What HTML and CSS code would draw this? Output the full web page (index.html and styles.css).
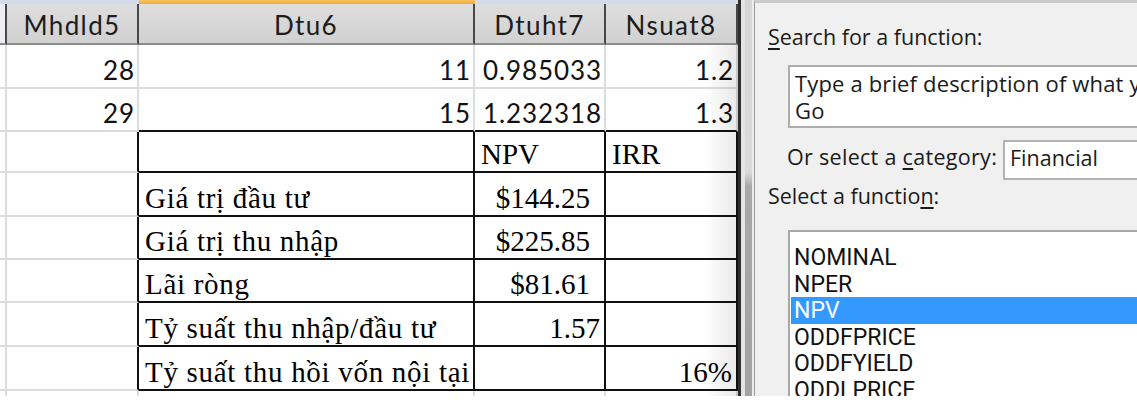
FILE: index.html
```html
<!DOCTYPE html>
<html>
<head>
<meta charset="utf-8">
<link rel="stylesheet" href="styles.css">
</head>
<body>
<div class="screen">
  <div class="sheet">
    <div class="c strip"></div><div class="c strip"></div><div class="c strip sel"></div><div class="c strip"></div><div class="c strip"></div>

    <div class="c hd stubh"></div>
    <div class="c hd">Mhdld5</div>
    <div class="c hd">Dtu6</div>
    <div class="c hd">Dtuht7</div>
    <div class="c hd">Nsuat8</div>

    <div class="c g"></div>
    <div class="c g num">28</div>
    <div class="c g num">11</div>
    <div class="c g num">0.985033</div>
    <div class="c g num">1.2</div>

    <div class="c g"></div>
    <div class="c g num">29</div>
    <div class="c g num bb">15</div>
    <div class="c g num bb">1.232318</div>
    <div class="c g num bb">1.3</div>

    <div class="c g"></div>
    <div class="c g br"></div>
    <div class="c g br bb t"></div>
    <div class="c g br bb t">NPV</div>
    <div class="c g br bb t">IRR</div>

    <div class="c g"></div>
    <div class="c g br"></div>
    <div class="c g br bb t lab">Giá trị đầu tư</div>
    <div class="c g br bb t tr cur">$144.25</div>
    <div class="c g br bb t"></div>

    <div class="c g"></div>
    <div class="c g br"></div>
    <div class="c g br bb t lab">Giá trị thu nhập</div>
    <div class="c g br bb t tr cur">$225.85</div>
    <div class="c g br bb t"></div>

    <div class="c g"></div>
    <div class="c g br"></div>
    <div class="c g br bb t lab">Lãi ròng</div>
    <div class="c g br bb t tr cur">$81.61</div>
    <div class="c g br bb t"></div>

    <div class="c g"></div>
    <div class="c g br"></div>
    <div class="c g br bb t lab">Tỷ suất thu nhập/đầu tư</div>
    <div class="c g br bb t tr">1.57</div>
    <div class="c g br bb t"></div>

    <div class="c g"></div>
    <div class="c g br"></div>
    <div class="c g br bb t lab">Tỷ suất thu hồi vốn nội tại</div>
    <div class="c g br bb t"></div>
    <div class="c g br bb t tr">16%</div>

    <div class="c g last"></div>
    <div class="c g last"></div>
    <div class="c g last"></div>
    <div class="c g last"></div>
    <div class="c g last"></div>
  </div>

  <div class="frame">
    <div class="f1"></div>
    <div class="f2"></div>
    <div class="f3"></div>
    <div class="f4"></div>
  </div>

  <div class="dialog">
    <div class="lbl lbl-search"><u>S</u>earch for a function:</div>
    <div class="searchbox">
      <div class="sb-line">Type a brief description of what you want to do and then click</div>
      <div class="sb-line">Go</div>
    </div>
    <div class="catrow">
      <div class="lbl cat-label">Or select a <u>c</u>ategory:</div>
      <div class="combo">Financial</div>
    </div>
    <div class="lbl lbl-func">Select a functio<u>n</u>:</div>
    <div class="list">
      <div class="item">NOMINAL</div>
      <div class="item">NPER</div>
      <div class="item on">NPV</div>
      <div class="item">ODDFPRICE</div>
      <div class="item">ODDFYIELD</div>
      <div class="item">ODDLPRICE</div>
    </div>
  </div>
</div>
</body>
</html>
```

FILE: styles.css
```css
html, body {
  margin: 0;
  padding: 0;
  background: #ffffff;
}

.screen {
  width: 1137px;
  height: 396px;
  display: flex;
  overflow: hidden;
}

/* ---------- spreadsheet ---------- */
.sheet {
  position: relative;
  width: 738px;
  flex: none;
  display: grid;
  grid-template-columns: 7px 132px 336px 131px 132px;
  grid-template-rows: 4px 41px 44px 43px 41px 44px 43px 43px 44px 44px 1fr;
  color: #111111;
}

.sheet::after {
  content: "";
  position: absolute;
  top: 45px;
  right: 0;
  bottom: 0;
  width: 34px;
  background: linear-gradient(to right, rgba(0,0,0,0), rgba(0,0,0,0.09));
  pointer-events: none;
}

.c {
  box-sizing: border-box;
  display: flex;
  align-items: flex-end;
  overflow: hidden;
  white-space: nowrap;
  min-width: 0;
}

.strip {
  background: #d3dce8;
}
.strip.sel {
  background: linear-gradient(#f9c45f, #f1a93a);
}

.hd {
  background: linear-gradient(#dedede, #d1d1d1);
  border-right: 2px solid #474747;
  border-bottom: 2px solid #8c8c8c;
  justify-content: center;
  align-items: center;
  padding-top: 2px;
  font-family: Lato, "Open Sans", sans-serif;
  font-size: 26px;
  letter-spacing: 1.4px;
  color: #1c1c1c;
}
.hd.stubh {
  background: #eceef1;
}

.g {
  border-right: 2px solid #d9dce1;
  border-bottom: 2px solid #d9dce1;
}
.g.bb {
  border-bottom-color: #111111;
}
.g.br {
  border-right-color: #111111;
}
.g.last {
  border-bottom: none;
}

.num {
  justify-content: flex-end;
  padding-right: 2px;
  padding-bottom: 2px;
  font-family: Lato, "Open Sans", sans-serif;
  font-size: 26px;
  letter-spacing: 0.9px;
  line-height: 30px;
}

.t {
  font-family: "Liberation Serif", "Times New Roman", serif;
  font-size: 29px;
  line-height: 32px;
  padding-left: 6px;
  padding-bottom: 1px;
  color: #000000;
}
.t.lab {
  letter-spacing: 0.7px;
}
.t.tr {
  justify-content: flex-end;
  padding-left: 0;
  padding-right: 4px;
}
.t.tr.cur {
  padding-right: 14px;
}

/* ---------- window frame ---------- */
.frame {
  flex: none;
  display: flex;
  width: 16px;
}
.f1 { width: 3px; background: #2f2f2f; }
.f2 { width: 4px; background: #e4e4e4; }
.f3 {
  width: 7px;
  background: linear-gradient(#d6d6d6 0, #dadada 172px, #a9a9a9 186px, #a2a2a2 100%);
}
.f4 { width: 2px; background: #ededed; }

/* ---------- dialog ---------- */
.dialog {
  flex: none;
  width: 420px;
  box-sizing: border-box;
  background: #f0f0f0;
  border-left: 1px solid #9c9c9c;
  border-top: 3px solid #cbcbcb;
  display: flex;
  flex-direction: column;
  font-family: "Open Sans", "Noto Sans", sans-serif;
  font-size: 21.5px;
  color: #1a1a1a;
}

.lbl {
  line-height: 29px;
  white-space: nowrap;
}
.lbl u {
  text-underline-offset: 3px;
}

.lbl-search {
  margin-top: 19px;
  padding-left: 13px;
}

.searchbox {
  margin-top: 14px;
  margin-left: 33px;
  height: 63px;
  width: 420px;
  box-sizing: border-box;
  background: #ffffff;
  border: 2px solid #adadad;
  border-right: none;
  padding: 3px 0 0 5px;
  overflow: hidden;
  font-size: 22px;
  letter-spacing: 0.15px;
}
.sb-line {
  line-height: 27px;
  white-space: nowrap;
}

.catrow {
  margin-top: 12px;
  margin-left: 32px;
  display: flex;
  align-items: flex-start;
}
.cat-label {
  width: 216px;
  flex: none;
  padding-top: 2px;
  letter-spacing: 0.3px;
}
.combo {
  flex: none;
  width: 200px;
  height: 40px;
  box-sizing: border-box;
  background: #ffffff;
  border: 2px solid #b3b3b3;
  border-right: none;
  padding: 1px 0 0 5px;
  line-height: 29px;
}

.lbl-func {
  margin-top: 1px;
  padding-left: 13px;
}

.list {
  margin-top: 20px;
  margin-left: 33px;
  width: 420px;
  flex: 1;
  box-sizing: border-box;
  background: #ffffff;
  border-top: 2px solid #a8a8a8;
  border-left: 2px solid #a8a8a8;
  padding: 12px 0 0 1px;
  overflow: hidden;
  font-family: Roboto, "Liberation Sans", sans-serif;
  font-size: 23px;
  color: #111111;
}
.item {
  height: 26.5px;
  line-height: 26.5px;
  padding-left: 3px;
  padding-top: 1px;
  box-sizing: border-box;
  white-space: nowrap;
}
.item.on {
  background: #3399ff;
  color: #ffffff;
}
```
